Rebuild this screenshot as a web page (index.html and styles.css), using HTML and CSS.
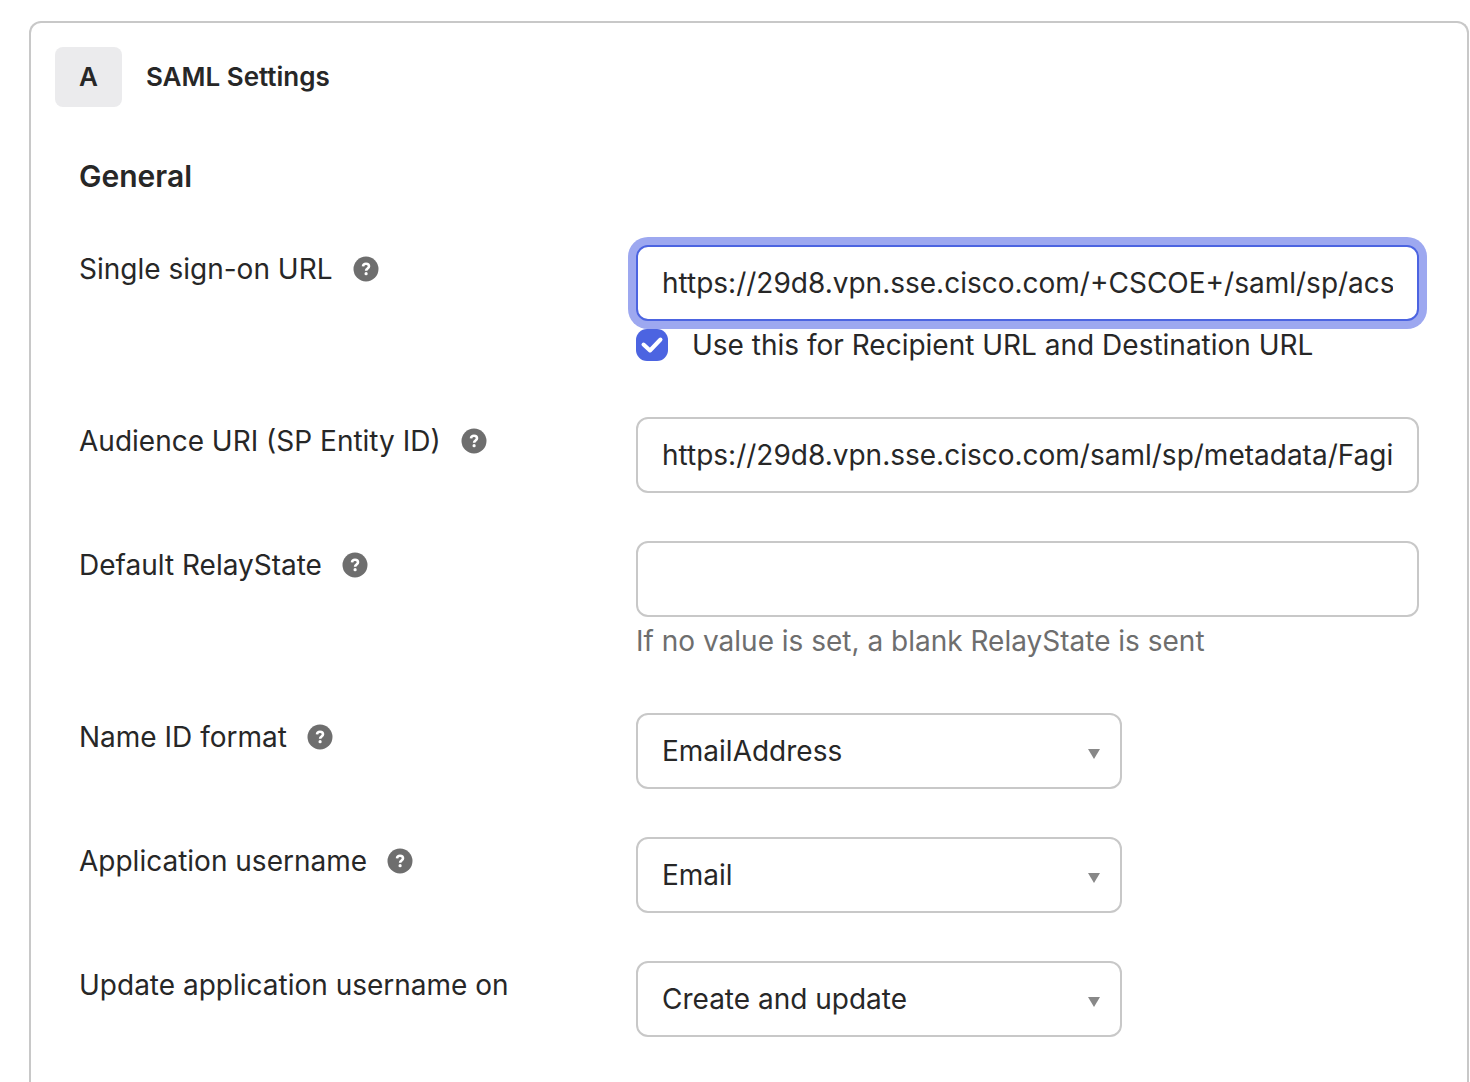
FILE: index.html
```html
<!DOCTYPE html>
<html lang="en">
<head>
<meta charset="utf-8">
<title>SAML Settings</title>
<link rel="stylesheet" href="styles.css">
</head>
<body>
<svg class="sprite" aria-hidden="true">
  <symbol id="help" viewBox="0 0 26 26">
    <circle cx="13" cy="13" r="12.5" fill="#6e6e6e"/>
    <path d="M10 10.4C10.2 8.7 11.4 7.8 13 7.8c1.800 0 3 1 3 2.500 0 2.200-2.900 2.200-2.900 4.500" fill="none" stroke="#fff" stroke-width="2.600"/>
    <circle cx="13.100" cy="17.700" r="1.600" fill="#fff"/>
  </symbol>
</svg>
<main class="card">
  <header class="card-header">
    <span class="step">A</span>
    <h1 class="card-title">SAML Settings</h1>
  </header>
  <form class="section">
    <h2 class="section-title">General</h2>
    <div class="row">
      <div class="label"><label for="sso">Single sign-on URL</label><svg class="help"><use href="#help"/></svg></div>
      <div class="field">
        <input class="control is-focused" id="sso" type="text" value="https://29d8.vpn.sse.cisco.com/+CSCOE+/saml/sp/acs?tgname=">
        <label class="check-line"><input class="check" type="checkbox" checked>Use this for Recipient URL and Destination URL</label>
      </div>
    </div>
    <div class="row">
      <div class="label"><label for="audience">Audience URI (SP Entity ID)</label><svg class="help"><use href="#help"/></svg></div>
      <div class="field"><input class="control" id="audience" type="text" value="https://29d8.vpn.sse.cisco.com/saml/sp/metadata/Fagi"></div>
    </div>
    <div class="row">
      <div class="label"><label for="relay">Default RelayState</label><svg class="help"><use href="#help"/></svg></div>
      <div class="field">
        <input class="control" id="relay" type="text">
        <p class="hint">If no value is set, a blank RelayState is sent</p>
      </div>
    </div>
    <div class="row">
      <div class="label"><label for="nameid">Name ID format</label><svg class="help"><use href="#help"/></svg></div>
      <div class="field"><select class="control select" id="nameid"><option>EmailAddress</option></select></div>
    </div>
    <div class="row">
      <div class="label"><label for="username">Application username</label><svg class="help"><use href="#help"/></svg></div>
      <div class="field"><select class="control select" id="username"><option>Email</option></select></div>
    </div>
    <div class="row">
      <div class="label"><label for="update">Update application username on</label></div>
      <div class="field"><select class="control select" id="update"><option>Create and update</option></select></div>
    </div>
  </form>
</main>
</body>
</html>
```
FILE: styles.css
```css
* { box-sizing: border-box; }

body {
  margin: 0;
  padding: 21px 1px 0 29px;
  background: #fff;
  color: #272727;
  font: 28px/48px Inter, "Liberation Sans", sans-serif;
}

h1, h2, p { margin: 0; }

.sprite { position: absolute; width: 0; height: 0; }

.card {
  min-height: calc(100vh - 21px);
  padding: 24px 24px 40px;
  border: 2px solid #c8c8c8;
  border-bottom: 0;
  border-radius: 12px 12px 0 0;
}

.card-header {
  display: flex;
  gap: 24px;
  font-size: 26px;
  font-weight: 600;
  line-height: 60px;
}

.step {
  padding: 0 24px;
  border-radius: 8px;
  background: #ebebed;
}

.card-title { font-size: inherit; font-weight: inherit; }

.section { padding: 45px 24px 0; }

.section-title { margin-bottom: 45px; font-size: 30px; font-weight: 600; }

.row {
  display: grid;
  grid-template-columns: 557fr 783fr;
  margin-bottom: 48px;
}

.row:last-child { margin-bottom: 0; }

.label { display: flex; align-items: center; align-self: start; gap: 20px; }

.help { width: 26px; height: 26px; }

.field { min-width: 0; }

.control {
  display: block;
  width: 100%;
  height: 76px;
  margin: 0;
  padding: 0 24px;
  border: 2px solid #c8c8c8;
  border-radius: 12px;
  outline: 0;
  background: #fff;
  color: inherit;
  font: inherit;
}

.is-focused {
  border-color: #4c64e1;
  box-shadow: 0 0 0 8px #9da8f0;
}

.select {
  width: 486px;
  max-width: 100%;
  appearance: none;
  background: #fff url("data:image/svg+xml,%3Csvg xmlns='http://www.w3.org/2000/svg' width='12' height='10'%3E%3Cpath d='M0 0h12L6 10z' fill='%23888'/%3E%3C/svg%3E") no-repeat right 20px top 34px;
}

.check-line { display: flex; align-items: center; gap: 24px; }

.check {
  width: 32px;
  height: 32px;
  margin: 0;
  appearance: none;
  border-radius: 11px;
  background: #4c64e1 url("data:image/svg+xml,%3Csvg xmlns='http://www.w3.org/2000/svg' width='32' height='32'%3E%3Cpath d='M7.500 15.500l6.500 6L24.500 10.500' fill='none' stroke='%23fff' stroke-width='4' stroke-linecap='round' stroke-linejoin='round'/%3E%3C/svg%3E") center no-repeat;
}

.hint { color: #6e6e6e; }
```
